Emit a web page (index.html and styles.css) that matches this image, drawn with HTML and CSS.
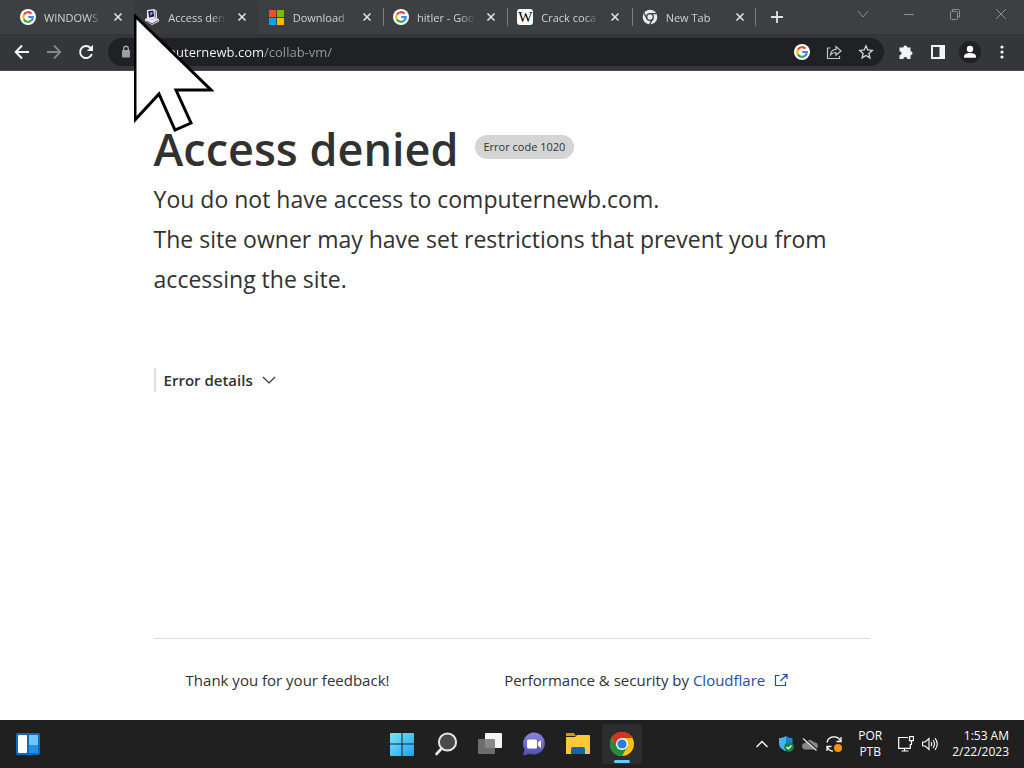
FILE: index.html
```html
<!DOCTYPE html>
<html lang="en">
<head>
  <meta charset="UTF-8" />
  <meta name="viewport" content="width=device-width, initial-scale=1.0"/>
  <title>Access denied</title>
  <link rel="stylesheet" href="styles.css">
</head>
<body>
  <!-- shared icons -->
  <svg class="sprite" width="0" height="0" aria-hidden="true">
    <symbol id="google" viewBox="0 0 16 16">
      <circle cx="8" cy="8" r="8" fill="#fff"/>
      <g fill="none" stroke-width="2.2">
        <path d="M3.9 5.6A4.8 4.8 0 0 1 11.5 4.7" stroke="#ea4335"/>
        <path d="M3.9 10.4a4.8 4.8 0 0 1 0-4.8" stroke="#fbbc05"/>
        <path d="M11.1 11.7a4.8 4.8 0 0 1-7.2-1.3" stroke="#34a853"/>
        <path d="M8.2 8h4.6a4.8 4.8 0 0 1-1.7 3.7" stroke="#4285f4"/>
      </g>
    </symbol>
    <symbol id="close" viewBox="0 0 16 16">
      <path d="M4.5 4.5l7 7M11.5 4.5l-7 7" stroke="#dfe1e5" stroke-width="1.6"/>
    </symbol>
  </svg>

  <header class="browser">
    <div class="tabstrip">
      <div class="tabs" role="tablist">
        <div class="tab" role="tab">
          <svg class="icon"><use href="#google"/></svg>
          <span class="tab-title">WINDOWS</span>
          <button class="tab-close" aria-label="Close tab"><svg class="icon"><use href="#close"/></svg></button>
        </div>
        <div class="tab active" role="tab" aria-selected="true">
          <svg class="icon" viewBox="0 0 16 16">
            <path d="M3 1l7-1 3 2v7l-6 2-4-2z" fill="#e8e6f4"/>
            <path d="M4.200 2.300l5-.9 1 6-5 1.200z" fill="#17134f"/>
            <path d="M6 3.500l2.500-.5v2l-2 2z" fill="#8c9ce0"/>
            <path d="M10.500 1l2 1.500-.5 6-1.300.6z" fill="#8e8aa6"/>
            <path d="M1 10l3-1.500 3 2.500 6-2 2 1.500v2L8 16l-7-4z" fill="#e8e6f4"/>
            <path d="M2 12l6 2.700 6-3.200" fill="none" stroke="#3f3b56" stroke-width=".8"/>
          </svg>
          <span class="tab-title">Access den</span>
          <button class="tab-close" aria-label="Close tab"><svg class="icon"><use href="#close"/></svg></button>
        </div>
        <div class="tab" role="tab">
          <svg class="icon" viewBox="0 0 16 16">
            <path fill="#f25022" d="M0 1h7v7H0z"/>
            <path fill="#7fba00" d="M8 1h7v7H8z"/>
            <path fill="#00a4ef" d="M0 9h7v7H0z"/>
            <path fill="#ffb900" d="M8 9h7v7H8z"/>
          </svg>
          <span class="tab-title">Download</span>
          <button class="tab-close" aria-label="Close tab"><svg class="icon"><use href="#close"/></svg></button>
        </div>
        <div class="tab divided" role="tab">
          <svg class="icon"><use href="#google"/></svg>
          <span class="tab-title">hitler - Goo</span>
          <button class="tab-close" aria-label="Close tab"><svg class="icon"><use href="#close"/></svg></button>
        </div>
        <div class="tab divided" role="tab">
          <span class="icon wiki">W</span>
          <span class="tab-title">Crack coca</span>
          <button class="tab-close" aria-label="Close tab"><svg class="icon"><use href="#close"/></svg></button>
        </div>
        <div class="tab divided" role="tab">
          <svg class="icon" viewBox="0 0 16 16">
            <circle cx="8" cy="8" r="7.300" fill="#e8eaed"/>
            <circle cx="8" cy="8" r="3.300" fill="#e8eaed" stroke="#3c4043" stroke-width="1.300"/>
            <path d="M8 4.700h6.600M5.100 9.700L1.900 4M10.900 9.700L7.700 15.200" stroke="#3c4043" stroke-width="1.300"/>
          </svg>
          <span class="tab-title">New Tab</span>
          <button class="tab-close" aria-label="Close tab"><svg class="icon"><use href="#close"/></svg></button>
        </div>
      </div>
      <button class="new-tab" aria-label="New tab">
        <svg class="icon" viewBox="0 0 16 16"><path d="M8 2v12M2 8h12" stroke="#dfe1e5" stroke-width="1.800"/></svg>
      </button>
      <div class="window-buttons">
        <button aria-label="Search tabs"><svg class="icon" viewBox="0 0 16 16"><path d="M3 5l5 6 5-6"/></svg></button>
        <button aria-label="Minimize"><svg class="icon" viewBox="0 0 16 16"><path d="M3 8.500h10"/></svg></button>
        <button aria-label="Restore"><svg class="icon" viewBox="0 0 16 16"><rect x="3.500" y="5.500" width="7" height="8" rx="1"/><path d="M5.500 5V3.500h6q1 0 1 1V11H11"/></svg></button>
        <button aria-label="Close"><svg class="icon" viewBox="0 0 16 16"><path d="M3 3l10 10M13 3L3 13"/></svg></button>
      </div>
    </div>

    <div class="toolbar">
      <button class="nav-btn" aria-label="Back"><svg class="icon" viewBox="0 0 16 16"><path d="M15 8H2M8 1.500L1.700 8 8 14.500" fill="none" stroke="#f1f3f4" stroke-width="2"/></svg></button>
      <button class="nav-btn" aria-label="Forward"><svg class="icon" viewBox="0 0 16 16"><path d="M1 8h13M8 1.500L14.300 8 8 14.500" fill="none" stroke="#85878a" stroke-width="1.800"/></svg></button>
      <button class="nav-btn" aria-label="Reload"><svg class="icon" viewBox="0 0 16 16"><path d="M13.800 10A6 6 0 1 1 12.500 4" fill="none" stroke="#f1f3f4" stroke-width="2"/><path d="M15 .8V7H8.800z" fill="#f1f3f4"/></svg></button>
      <div class="omnibox">
        <svg class="icon" viewBox="0 0 16 16"><rect x="4" y="6" width="8" height="7.500" rx="1" fill="#9aa0a6"/><path d="M5.700 6V4.500a2.300 2.300 0 0 1 4.600 0V6" fill="none" stroke="#9aa0a6" stroke-width="1.400"/></svg>
        <input class="address" type="text" aria-label="Address" value="computernewb.com/collab-vm/">
        <button class="nav-btn" aria-label="Search with Google"><svg class="icon"><use href="#google"/></svg></button>
        <button class="nav-btn" aria-label="Share"><svg class="icon" viewBox="0 0 16 16"><path d="M4.500 4H1.500v10.500h12V12M4.500 11c.3-4 2.500-5.500 5.500-5.600V2.500l5 4.500-5 4.300V8.500c-2.500 0-4 .6-5.500 2.500z" fill="none" stroke="#c4c7c9" stroke-width="1.200"/></svg></button>
        <button class="nav-btn" aria-label="Bookmark"><svg class="icon" viewBox="0 0 16 16"><path d="M8 1.800l1.800 4.200 4.500.4-3.400 3 1 4.500L8 11.500l-3.900 2.400 1-4.500-3.400-3 4.500-.4z" fill="none" stroke="#d5d7d9" stroke-width="1.300"/></svg></button>
      </div>
      <div class="toolbar-end">
        <button class="nav-btn" aria-label="Extensions"><svg class="icon" viewBox="0 0 16 16"><path d="M1.500 3.500h3.800a2 2 0 0 1 4 0h3.200v3.700a2 2 0 0 1 0 4V15H9.300a2 2 0 0 0-4 0H1.500v-3.800a2 2 0 0 0 0-4z" fill="#f1f3f4"/></svg></button>
        <button class="nav-btn" aria-label="Side panel"><svg class="icon" viewBox="0 0 16 16"><path d="M1 1h14v14H1zM3 3v10h6.500V3z" fill="#f1f3f4" fill-rule="evenodd"/></svg></button>
        <button class="nav-btn profile" aria-label="Profile"><svg class="icon" viewBox="0 0 16 16"><circle cx="8" cy="5" r="3.200" fill="#fff"/><path d="M2 13.800v-1.500C2 10 5.500 9 8 9s6 1 6 3.300v1.500z" fill="#fff"/></svg></button>
        <button class="nav-btn" aria-label="Menu"><svg class="icon" viewBox="0 0 16 16"><g fill="#f1f3f4"><circle cx="8" cy="3" r="1.600"/><circle cx="8" cy="8" r="1.600"/><circle cx="8" cy="13" r="1.600"/></g></svg></button>
      </div>
    </div>
  </header>

  <main class="page">
    <div class="heading">
      <h1>Access denied</h1>
      <span class="code">Error code 1020</span>
    </div>
    <p class="message">You do not have access to computernewb.com.</p>
    <p class="message">The site owner may have set restrictions that prevent you from accessing the site.</p>
    <button class="details">
      Error details
      <svg class="icon" viewBox="0 0 16 16"><path d="M2 5l6 6 6-6" fill="none" stroke="#313131" stroke-width="1.200"/></svg>
    </button>
    <footer class="footer">
      <div class="footer-col">Thank you for your feedback!</div>
      <div class="footer-col">
        Performance &amp; security by <a href="#">Cloudflare<svg class="icon" viewBox="0 0 16 16"><path d="M6.500 3.500h-4v10h10v-4M9.500 2.500h4.500v4.500M14 2.500L7.500 9" fill="none" stroke="#1d4fa5" stroke-width="1.200"/></svg></a>
      </div>
    </footer>
  </main>

  <nav class="taskbar">
    <div class="widgets">
      <button class="task" aria-label="Widgets">
        <svg viewBox="0 0 24 24"><rect x="0" y="1" width="24" height="22" rx="2" fill="#0f6cbd"/><rect x="2" y="3" width="9" height="18" rx="1" fill="#fff"/><rect x="13" y="3" width="9" height="10" fill="#6cc8fa"/><rect x="13" y="13" width="9" height="8" fill="#2492e0"/></svg>
      </button>
    </div>
    <div class="apps">
      <button class="task" aria-label="Start">
        <svg viewBox="0 0 24 24"><defs><linearGradient id="win" x2="1" y2="1"><stop stop-color="#7be3fb"/><stop offset="1" stop-color="#1aa5f2"/></linearGradient></defs><path d="M1 1h10.500v10.500H0V2q0-1 1-1zM12.500 1H23q1 0 1 1v9.500H12.500zM0 12.500h11.500V24H1q-1 0-1-1zM12.500 12.500H24V23q0 1-1 1H12.500z" fill="url(#win)"/></svg>
      </button>
      <button class="task" aria-label="Search">
        <svg viewBox="0 0 24 24"><path d="M8 16L2.500 22" stroke="#e6e6e6" stroke-width="2.600" stroke-linecap="round"/><circle cx="13.500" cy="10" r="8.600" fill="#4a4a4a" stroke="#e6e6e6" stroke-width="2"/></svg>
      </button>
      <button class="task" aria-label="Task view">
        <svg viewBox="0 0 24 24"><rect x="7" y="1" width="17" height="15" rx="1" fill="#f2f2f2"/><rect x="0" y="7" width="17" height="15" rx="1" fill="#777" opacity=".88"/></svg>
      </button>
      <button class="task" aria-label="Chat">
        <svg viewBox="0 0 24 24"><defs><linearGradient id="chat" x2="0" y2="1"><stop stop-color="#8b83d9"/><stop offset="1" stop-color="#4f4fb5"/></linearGradient></defs><path d="M12.500.5a11 11 0 1 1-4.500 21.300L1 23.500l1.600-6A11.300 11.300 0 0 1 12.500.5z" fill="url(#chat)"/><rect x="5" y="7.500" width="10" height="9" rx="1.500" fill="#fff"/><path d="M16 10.500l3-2.500v8l-3-2.500z" fill="#fff"/></svg>
      </button>
      <button class="task" aria-label="File Explorer">
        <svg viewBox="0 0 24 24"><path d="M0 2q0-1 1-1h7l2 3H0z" fill="#d39600"/><path d="M0 5h9l2-2h12q1 0 1 1v18H0z" fill="#fcc934"/><path d="M5 22v-5q0-2 2-2h10q2 0 2 2v5z" fill="#0f68ad"/></svg>
      </button>
      <button class="task running" aria-label="Google Chrome">
        <svg viewBox="0 0 24 24"><circle cx="12" cy="12" r="12" fill="#fbc116"/><path d="M1.600 6A12 12 0 0 1 22.400 6H12L6.800 15z" fill="#d93025"/><path d="M1.600 6A12 12 0 0 0 12 24l5.200-9H6.800z" fill="#1e8e3e"/><circle cx="12" cy="12" r="6" fill="#fff"/><circle cx="12" cy="12" r="4.600" fill="#2a7de9"/></svg>
      </button>
    </div>
    <div class="tray">
      <button class="tray-icon" aria-label="Show hidden icons"><svg class="icon" viewBox="0 0 16 16"><path d="M2.500 11L8 5.500l5.500 5.500" fill="none" stroke="#fff" stroke-width="1.300"/></svg></button>
      <button class="tray-icon" aria-label="Windows Security"><svg class="icon" viewBox="0 0 16 16"><path d="M8 0c2 1.500 4 2 6.500 2v5c0 4-3 6.500-6.500 8C4 13.500 1 11 1 7V2c3 0 5-.5 7-2z" fill="#1683d8"/><path d="M8 0v15C4 13.500 1 11 1 7V2c3 0 5-.5 7-2z" fill="#44b3ef"/><circle cx="11" cy="11" r="4.800" fill="#16853a"/><path d="M8.600 11l1.800 1.800 3-3.300" fill="none" stroke="#fff" stroke-width="1.300"/></svg></button>
      <button class="tray-icon" aria-label="OneDrive"><svg class="icon" viewBox="0 0 16 16"><path d="M3.500 13.500a3.300 3.300 0 0 1-.3-6.600A5.200 5.200 0 0 1 12 6.200a3.700 3.700 0 0 1 1 7.300z" fill="#85878a"/><path d="M2 2l13 11.500" stroke="#202020" stroke-width="1.200"/><path d="M1 2.500l13.500 12" stroke="#e6e6e6" stroke-width="1.200"/></svg></button>
      <button class="tray-icon" aria-label="Windows Update"><svg class="icon" viewBox="0 0 16 16"><path d="M1 6.500A7.200 7.200 0 0 1 14.500 5M15 1v4.500h-4.500M7 15.200a7 7 0 0 1-5.500-4M1 15v-4.500h4.500" fill="none" stroke="#fff" stroke-width="1.300"/><circle cx="12" cy="12" r="4" fill="#f7940d"/></svg></button>
      <button class="language">POR<br>PTB</button>
      <button class="tray-icon" aria-label="Network"><svg class="icon" viewBox="0 0 16 16"><path d="M10 1.500H.7v10.800h11.600V8M3.500 15h7M6.500 12.500V15M11.500.7h4v4h-4zM13.500 5v4" fill="none" stroke="#fff" stroke-width="1.200"/></svg></button>
      <button class="tray-icon" aria-label="Volume"><svg class="icon" viewBox="0 0 16 16"><path d="M.6 6v4h2.600L7 13.500v-11L3.200 6zM9 6q1.500 2 0 4M11 4q3 4 0 8M13 2.200q4.500 5.800 0 11.600" fill="none" stroke="#fff" stroke-width="1.100"/></svg></button>
      <button class="clock">1:53 AM<br>2/22/2023</button>
    </div>
  </nav>

  <!-- large mouse pointer -->
  <svg class="pointer" viewBox="0 0 80 122" aria-hidden="true">
    <path d="M1 4v104l24-26 16 36 16-7-15-33h35z" fill="#fff" stroke="#000" stroke-width="3"/>
  </svg>
</body>
</html>
```

FILE: styles.css
```css
* {
  box-sizing: border-box;
}

body {
  font-family: "Open Sans", "Noto Sans", sans-serif;
  margin: 0;
  min-height: 100vh;
  display: flex;
  flex-direction: column;
  background: #fff;
  color: #313131;
}

button {
  font: inherit;
  color: inherit;
  background: none;
  border: none;
  padding: 0;
  cursor: pointer;
}

.sprite {
  position: absolute;
}

.icon {
  width: 16px;
  height: 16px;
  flex: none;
  display: block;
}

/* browser */
.browser {
  background: #3c4043;
  border-bottom: 1px solid #4b4b4d;
}

.tabstrip {
  display: flex;
  height: 34px;
  padding-left: 10px;
}

.tabs {
  display: flex;
  flex: 0 1 746px;
}

.tab {
  flex: 1;
  display: flex;
  align-items: center;
  gap: 8px;
  padding-left: 10px;
  color: #d0d3d6;
  font-size: 11px;
}

.tab.active {
  background: #383a3e;
  border-radius: 8px 8px 0 0;
}

.tab.divided {
  background: linear-gradient(#7b7e81, #7b7e81) left center / 1px 18px no-repeat;
}

.tab.divided:last-child {
  background: linear-gradient(#7b7e81, #7b7e81) left center / 1px 18px no-repeat,
    linear-gradient(#7b7e81, #7b7e81) right center / 1px 18px no-repeat;
}

.tab-title {
  width: 58px;
  white-space: nowrap;
  -webkit-mask-image: linear-gradient(90deg, #000 75%, transparent);
  mask-image: linear-gradient(90deg, #000 75%, transparent);
}

.wiki {
  background: #fff;
  border-radius: 3px;
  color: #000;
  font: 15px/16px "Liberation Serif", serif;
  text-align: center;
}

.new-tab {
  padding: 0 13px;
}

.window-buttons {
  display: flex;
  margin-left: auto;
  height: 28px;
}

.window-buttons button {
  width: 46px;
  display: flex;
  align-items: center;
  justify-content: center;
}

.window-buttons path,
.window-buttons rect {
  fill: none;
  stroke: #8d9093;
}

.toolbar {
  display: flex;
  align-items: center;
  height: 36px;
  padding: 0 6px;
  background: #35363a;
}

.nav-btn {
  width: 32px;
  height: 28px;
  display: flex;
  align-items: center;
  justify-content: center;
}

.omnibox {
  flex: 1;
  display: flex;
  align-items: center;
  height: 28px;
  margin: 0 6px;
  padding: 0 2px 0 10px;
  border-radius: 14px;
  background: #202124;
}

.address {
  flex: 1;
  min-width: 0;
  border: none;
  outline: none;
  padding: 0;
  margin-left: 8px;
  font: 13px "Open Sans", "Noto Sans", sans-serif;
  /* domain is bright, path is dimmed */
  background: linear-gradient(90deg, #fff 122px, #9aa0a6 122px);
  -webkit-background-clip: text;
  background-clip: text;
  color: transparent;
}

.toolbar-end {
  display: flex;
}

.profile .icon {
  width: 22px;
  height: 22px;
  padding: 3px;
  border-radius: 50%;
  background: #202124;
}

/* error page */
.page {
  flex: 1;
  display: flex;
  flex-direction: column;
  width: 70%;
  margin: 0 auto;
  padding-top: 48px;
}

.heading {
  display: flex;
  align-items: flex-start;
  gap: 16px;
}

h1 {
  margin: 0;
  font-size: 45px;
  line-height: 60px;
  font-weight: 600;
}

.code {
  margin-top: 16px;
  padding: 0 9px;
  border-radius: 12px;
  background: #d5d5d5;
  font-size: 11px;
  line-height: 24px;
}

.message {
  margin: 0;
  font-size: 23px;
  line-height: 40px;
}

.details {
  align-self: flex-start;
  display: flex;
  align-items: center;
  gap: 8px;
  margin-top: 69px;
  padding-left: 8px;
  border-left: 2px solid #dedede;
  font-size: 15px;
  line-height: 24px;
  font-weight: 600;
}

.footer {
  display: grid;
  grid-template-columns: 4fr 4fr 1fr;
  margin-top: auto;
  padding: 29px 0 28px;
  border-top: 1px solid #dedede;
  font-size: 15px;
  line-height: 24px;
}

.footer-col {
  padding-left: 32px;
  white-space: nowrap;
}

.footer a {
  color: #1d4fa5;
  text-decoration: none;
}

.footer .icon {
  display: inline-block;
  margin-left: 8px;
  vertical-align: -2px;
}

/* taskbar */
.taskbar {
  display: grid;
  grid-template-columns: 1fr auto 1fr;
  align-items: center;
  height: 48px;
  background: #202020;
  color: #fff;
  font-size: 12px;
  line-height: 16px;
}

.widgets {
  padding-left: 8px;
}

.apps {
  display: flex;
  gap: 4px;
}

.task {
  width: 40px;
  height: 40px;
  display: flex;
  align-items: center;
  justify-content: center;
  border-radius: 4px;
}

.task svg {
  width: 24px;
  height: 24px;
}

.running {
  position: relative;
  background: #2d2d2d;
}

.running::after {
  content: "";
  position: absolute;
  bottom: 1px;
  width: 16px;
  height: 3px;
  border-radius: 2px;
  background: #60cdff;
}

.tray {
  display: flex;
  align-items: center;
  justify-content: flex-end;
  padding-right: 15px;
}

.tray-icon {
  width: 24px;
  height: 40px;
  display: flex;
  align-items: center;
  justify-content: center;
}

.language {
  padding: 0 12px;
}

.clock {
  padding-left: 10px;
  text-align: right;
}

.pointer {
  position: absolute;
  left: 134px;
  top: 12px;
  width: 80px;
  height: 122px;
  pointer-events: none;
}
```
